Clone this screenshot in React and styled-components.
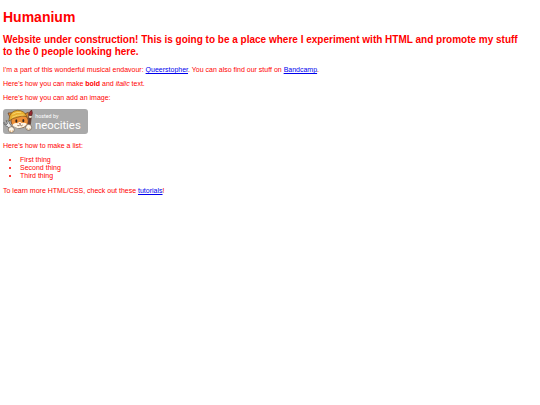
import styled, { createGlobalStyle } from "styled-components";

const GlobalStyle = createGlobalStyle`
  body {
    margin: 0;
    background-color: #fff;
    color: #f00;
    font-family: "Liberation Sans", Arial, sans-serif;
    font-size: 7px;
    line-height: 7px;
  }
`;

const Page = styled.main`
  padding: 9px 12px 7px 3px;
`;

const Title = styled.h1`
  margin: 0 0 9px;
  font-size: 14px;
  line-height: 16px;
`;

const Subtitle = styled.h2`
  margin: 0 0 8px;
  font-size: 10px;
  line-height: 12px;
`;

const Paragraph = styled.p`
  margin: 0 0 7px;
`;

const Link = styled.a`
  color: #00e;
  text-decoration: underline;
`;

const List = styled.ul`
  margin: 0 0 7px;
  padding-left: 17px;
  line-height: 8px;
`;

const Badge = styled.svg`
  width: 85px;
  height: 25px;
  margin-top: 1px;
`;

const BadgeText = styled.text`
  fill: #fff;
  font-family: Roboto, "Open Sans", sans-serif;
  font-size: ${({ $size }) => $size}px;
`;

const NeocitiesBadge = () => (
  <Badge viewBox="0 0 255 75" role="img" aria-label="Hosted by Neocities">
    <rect width="255" height="75" rx="9" fill="#a9a9a9" />

    {/* wrench */}
    <path
      d="M3 40 L9 48 L14 43 L9 35 Q19 35 20 44 L31 58 L24 64 L13 52 Q2 50 3 40Z"
      fill="#ececec"
      stroke="#4a4a4a"
      strokeWidth="2"
    />

    {/* cat head */}
    <path
      d="M22 28 L15 12 L32 11 Z M62 16 L76 10 L76 31 Z"
      fill="#e8903a"
      stroke="#5a351a"
      strokeWidth="2"
    />
    <ellipse cx="50" cy="36" rx="26" ry="21" fill="#ee8f36" stroke="#5a351a" strokeWidth="2" />
    <path
      d="M28 47 Q35 40 44 43 Q50 36 56 42 Q66 40 72 45 Q66 56 50 57 Q34 57 28 47Z"
      fill="#fff5e5"
    />
    <path
      d="M18 32 Q20 6 43 4 Q63 3 72 23 Q56 18 43 25 Q29 27 18 36Z"
      fill="#e8ae30"
      stroke="#75511a"
      strokeWidth="2"
    />
    <path d="M28 16 Q41 7 55 11 M27 25 Q42 16 62 18" fill="none" stroke="#f8d66a" strokeWidth="3" />
    <ellipse cx="40" cy="36" rx="3" ry="5" fill="#39251c" />
    <ellipse cx="61" cy="35" rx="3" ry="5" fill="#39251c" />
    <path d="M47 43 L54 43 L51 47Z" fill="#9a4a42" />
    <path d="M43 49 Q48 53 51 47 Q55 53 59 48" fill="none" stroke="#5a351a" strokeWidth="2" />

    {/* paint brush */}
    <path d="M79 24 L85 25 L81 54 L75 53Z" fill="#6b3c38" stroke="#51311e" strokeWidth="2" />
    <path d="M79 19 L86 20 L85 27 L78 26Z" fill="#eee1c7" />
    <path d="M78 19 Q77 9 86 3 Q90 12 86 20Z" fill="#99252d" stroke="#4d211d" strokeWidth="2" />

    {/* paws */}
    <circle cx="25" cy="62" r="9" fill="#fff8eb" stroke="#665343" strokeWidth="2" />
    <path d="M22 64 L23 69 M28 64 L28 69" stroke="#d99a55" strokeWidth="2" />
    <circle cx="77" cy="55" r="9" fill="#fff8eb" stroke="#665343" strokeWidth="2" />
    <path d="M73 58 L75 62 M80 58 L80 62" stroke="#d99a55" strokeWidth="2" />

    <BadgeText x="97" y="26" $size={16}>
      hosted by
    </BadgeText>
    <BadgeText x="96" y="59" $size={34}>
      neocities
    </BadgeText>
  </Badge>
);

const THINGS = ["First thing", "Second thing", "Third thing"];

const App = () => (
  <>
    <GlobalStyle />
    <Page>
      <Title>Humanium</Title>
      <Subtitle>
        Website under construction! This is going to be a place where I
        experiment with HTML and promote my stuff to the 0 people looking here.
      </Subtitle>

      <Paragraph>
        I'm a part of this wonderful musical endavour:{" "}
        <Link href="#queerstopher">Queerstopher</Link>. You can also find our
        stuff on <Link href="#bandcamp">Bandcamp</Link>.
      </Paragraph>

      <Paragraph>
        Here's how you can make <strong>bold</strong> and <em>italic</em> text.
      </Paragraph>

      <Paragraph>Here's how you can add an image:</Paragraph>

      <Paragraph>
        <NeocitiesBadge />
      </Paragraph>

      <Paragraph>Here's how to make a list:</Paragraph>

      <List>
        {THINGS.map((thing) => (
          <li key={thing}>{thing}</li>
        ))}
      </List>

      <Paragraph>
        To learn more HTML/CSS, check out these{" "}
        <Link href="#tutorials">tutorials</Link>!
      </Paragraph>
    </Page>
  </>
);

export default App;
